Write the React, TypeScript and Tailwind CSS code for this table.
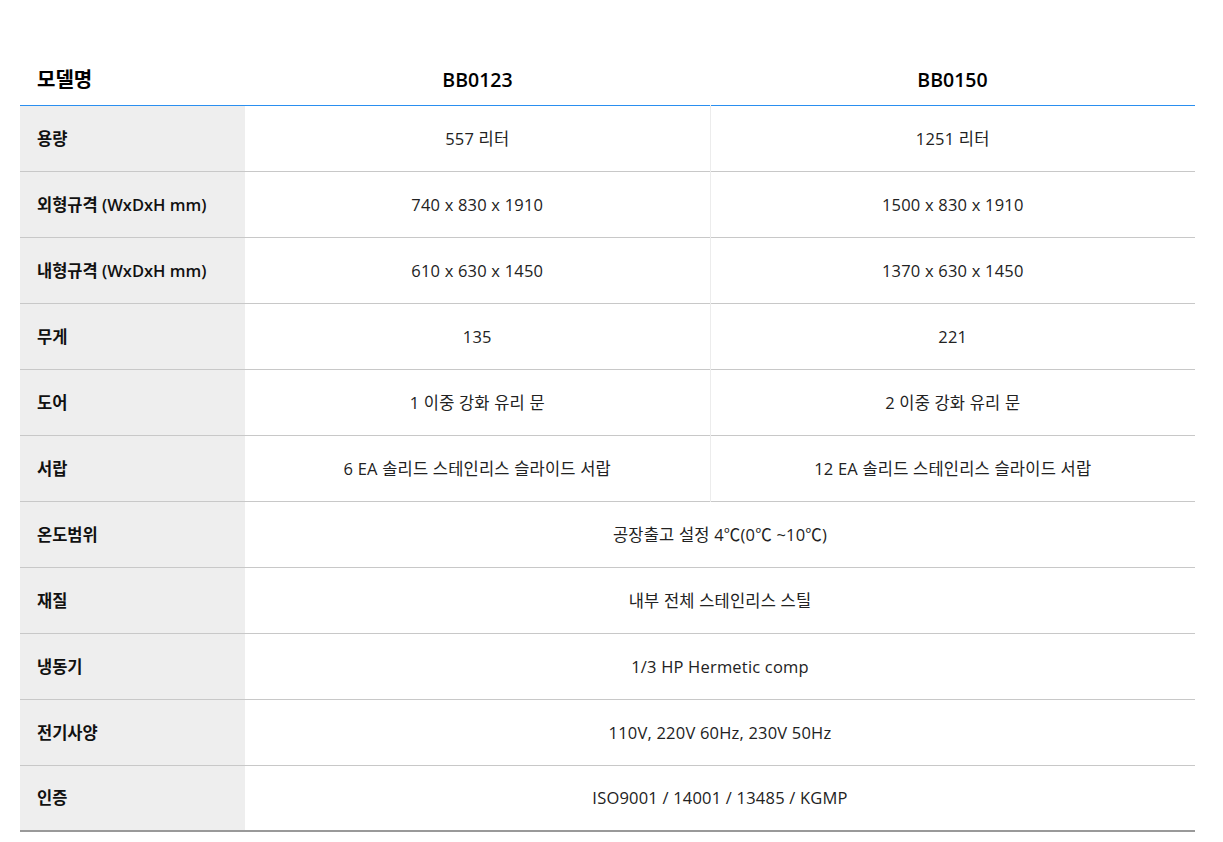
const font = { fontFamily: '"Open Sans", "Noto Sans CJK KR", sans-serif' };

type Row = { label: string; a: string; b?: string };

const rows: Row[] = [
  { label: "용량", a: "557 리터", b: "1251 리터" },
  { label: "외형규격 (WxDxH mm)", a: "740 x 830 x 1910", b: "1500 x 830 x 1910" },
  { label: "내형규격 (WxDxH mm)", a: "610 x 630 x 1450", b: "1370 x 630 x 1450" },
  { label: "무게", a: "135", b: "221" },
  { label: "도어", a: "1 이중 강화 유리 문", b: "2 이중 강화 유리 문" },
  { label: "서랍", a: "6 EA 솔리드 스테인리스 슬라이드 서랍", b: "12 EA 솔리드 스테인리스 슬라이드 서랍" },
  { label: "온도범위", a: "공장출고 설정 4℃(0℃ ~10℃)" },
  { label: "재질", a: "내부 전체 스테인리스 스틸" },
  { label: "냉동기", a: "1/3 HP Hermetic comp" },
  { label: "전기사양", a: "110V, 220V 60Hz, 230V 50Hz" },
  { label: "인증", a: "ISO9001 / 14001 / 13485 / KGMP" },
];

export default function App() {
  return (
    <div className="bg-white min-h-[842px] px-5 pt-[55px]" style={font}>
      <table className="w-[1175px] border-collapse table-fixed text-[#222]">
        <colgroup>
          <col className="w-[225px]" />
          <col className="w-[465px]" />
          <col className="w-[485px]" />
        </colgroup>
        <thead>
          <tr className="h-[50px] border-b border-[#2a8ff0]">
            <th className="text-left pl-[17px] text-[20px] font-bold text-black">모델명</th>
            <th className="text-center text-[19.5px] font-semibold text-black">BB0123</th>
            <th className="text-center text-[19.5px] font-semibold text-black">BB0150</th>
          </tr>
        </thead>
        <tbody className="border-b-2 border-[#999]">
          {rows.map((r, i) => (
            <tr key={i} className={"h-[66px] " + (i < rows.length - 1 ? "border-b border-[#c8c8c8]" : "")}>
              <td className="bg-[#eeeeee] pl-[17px] pt-[2px] text-[16.5px] font-semibold text-[#111]">{r.label}</td>
              {r.b ? (
                <>
                  <td className="text-center pt-[2px] text-[16.5px] tracking-[0.2px] border-r border-[#ececec]">{r.a}</td>
                  <td className="text-center pt-[2px] text-[16.5px] tracking-[0.2px]">{r.b}</td>
                </>
              ) : (
                <td colSpan={2} className="text-center pt-[2px] text-[16.5px] tracking-[0.2px]">{r.a}</td>
              )}
            </tr>
          ))}
        </tbody>
      </table>
    </div>
  );
}
